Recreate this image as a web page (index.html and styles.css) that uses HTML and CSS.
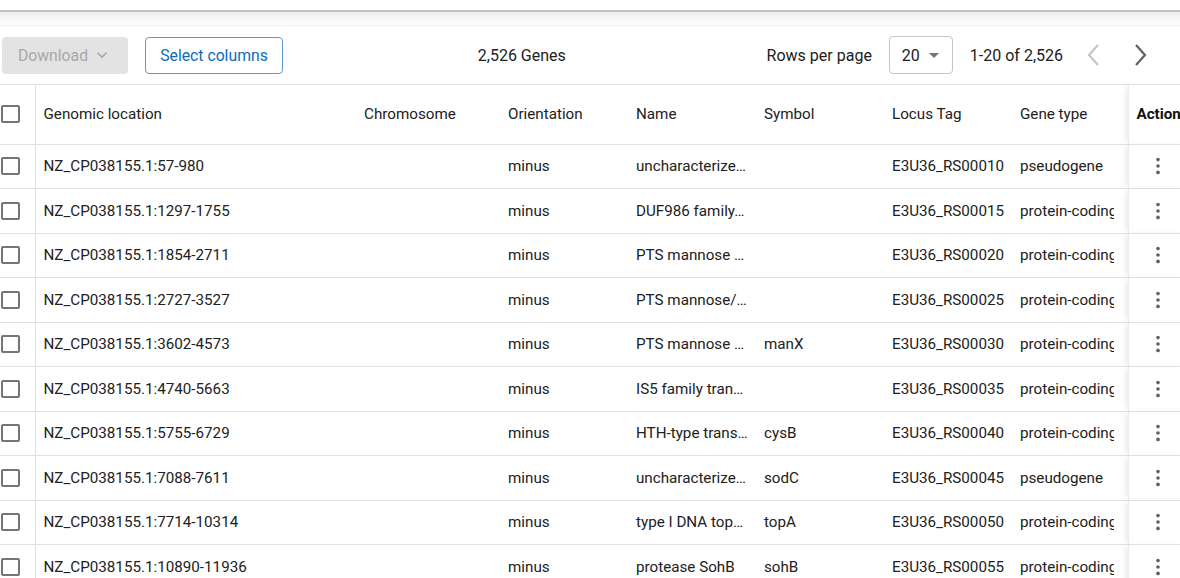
FILE: index.html
```html
<!DOCTYPE html>
<html lang="en">
<head>
<meta charset="utf-8">
<title>Genes</title>
<link rel="stylesheet" href="styles.css">
</head>
<body>
<div class="page">
  <div class="topbar"></div>
  <div class="fade"></div>
  <div class="toolbar">
    <div class="left-group">
      <button class="btn btn-disabled" disabled>Download
        <svg class="chev-down" viewBox="0 0 24 24" width="20" height="20"><path d="M7.41 8.59 12 13.17l4.59-4.58L18 10l-6 6-6-6z"/></svg>
      </button>
      <button class="btn btn-outline">Select columns</button>
    </div>
    <div class="count">2,526 Genes</div>
    <div class="pager">
      <span class="rpp">Rows per page</span>
      <div class="select"><span>20</span><svg viewBox="0 0 10 5" width="10" height="5"><path d="M0 0h10L5 5z"/></svg></div>
      <span class="range">1-20 of 2,526</span>
      <button class="icon-btn prev" aria-label="Previous"><svg viewBox="0 0 14 24" width="14" height="24"><path d="M12 2 3 12l9 10" /></svg></button>
      <button class="icon-btn next" aria-label="Next"><svg viewBox="0 0 14 24" width="14" height="24"><path d="M2 2l9 10-9 10" /></svg></button>
    </div>
  </div>
  <div class="table-wrap">
    <table class="grid">
      <colgroup>
        <col class="c-check"><col class="c-loc"><col class="c-chr"><col class="c-std"><col class="c-std"><col class="c-std"><col class="c-std"><col class="c-type"><col class="c-act">
      </colgroup>
      <thead>
        <tr>
          <th class="check"><span class="cb"></span></th>
          <th>Genomic location</th>
          <th>Chromosome</th>
          <th>Orientation</th>
          <th>Name</th>
          <th>Symbol</th>
          <th>Locus Tag</th>
          <th class="type"><div class="clip">Gene type</div></th>
          <th class="act">Action</th>
        </tr>
      </thead>
      <tbody>
        <tr><td class="check"><span class="cb"></span></td><td>NZ_CP038155.1:57-980</td><td></td><td>minus</td><td>uncharacterize…</td><td></td><td>E3U36_RS00010</td><td class="type"><div class="clip">pseudogene</div></td><td class="act"><svg class="kebab" viewBox="0 0 24 24"><circle cx="12" cy="5" r="2"/><circle cx="12" cy="12" r="2"/><circle cx="12" cy="19" r="2"/></svg></td></tr>
        <tr><td class="check"><span class="cb"></span></td><td>NZ_CP038155.1:1297-1755</td><td></td><td>minus</td><td>DUF986 family…</td><td></td><td>E3U36_RS00015</td><td class="type"><div class="clip">protein-coding</div></td><td class="act"><svg class="kebab" viewBox="0 0 24 24"><circle cx="12" cy="5" r="2"/><circle cx="12" cy="12" r="2"/><circle cx="12" cy="19" r="2"/></svg></td></tr>
        <tr><td class="check"><span class="cb"></span></td><td>NZ_CP038155.1:1854-2711</td><td></td><td>minus</td><td>PTS mannose …</td><td></td><td>E3U36_RS00020</td><td class="type"><div class="clip">protein-coding</div></td><td class="act"><svg class="kebab" viewBox="0 0 24 24"><circle cx="12" cy="5" r="2"/><circle cx="12" cy="12" r="2"/><circle cx="12" cy="19" r="2"/></svg></td></tr>
        <tr><td class="check"><span class="cb"></span></td><td>NZ_CP038155.1:2727-3527</td><td></td><td>minus</td><td>PTS mannose/…</td><td></td><td>E3U36_RS00025</td><td class="type"><div class="clip">protein-coding</div></td><td class="act"><svg class="kebab" viewBox="0 0 24 24"><circle cx="12" cy="5" r="2"/><circle cx="12" cy="12" r="2"/><circle cx="12" cy="19" r="2"/></svg></td></tr>
        <tr><td class="check"><span class="cb"></span></td><td>NZ_CP038155.1:3602-4573</td><td></td><td>minus</td><td>PTS mannose …</td><td>manX</td><td>E3U36_RS00030</td><td class="type"><div class="clip">protein-coding</div></td><td class="act"><svg class="kebab" viewBox="0 0 24 24"><circle cx="12" cy="5" r="2"/><circle cx="12" cy="12" r="2"/><circle cx="12" cy="19" r="2"/></svg></td></tr>
        <tr><td class="check"><span class="cb"></span></td><td>NZ_CP038155.1:4740-5663</td><td></td><td>minus</td><td>IS5 family tran…</td><td></td><td>E3U36_RS00035</td><td class="type"><div class="clip">protein-coding</div></td><td class="act"><svg class="kebab" viewBox="0 0 24 24"><circle cx="12" cy="5" r="2"/><circle cx="12" cy="12" r="2"/><circle cx="12" cy="19" r="2"/></svg></td></tr>
        <tr><td class="check"><span class="cb"></span></td><td>NZ_CP038155.1:5755-6729</td><td></td><td>minus</td><td>HTH-type trans…</td><td>cysB</td><td>E3U36_RS00040</td><td class="type"><div class="clip">protein-coding</div></td><td class="act"><svg class="kebab" viewBox="0 0 24 24"><circle cx="12" cy="5" r="2"/><circle cx="12" cy="12" r="2"/><circle cx="12" cy="19" r="2"/></svg></td></tr>
        <tr><td class="check"><span class="cb"></span></td><td>NZ_CP038155.1:7088-7611</td><td></td><td>minus</td><td>uncharacterize…</td><td>sodC</td><td>E3U36_RS00045</td><td class="type"><div class="clip">pseudogene</div></td><td class="act"><svg class="kebab" viewBox="0 0 24 24"><circle cx="12" cy="5" r="2"/><circle cx="12" cy="12" r="2"/><circle cx="12" cy="19" r="2"/></svg></td></tr>
        <tr><td class="check"><span class="cb"></span></td><td>NZ_CP038155.1:7714-10314</td><td></td><td>minus</td><td>type I DNA top…</td><td>topA</td><td>E3U36_RS00050</td><td class="type"><div class="clip">protein-coding</div></td><td class="act"><svg class="kebab" viewBox="0 0 24 24"><circle cx="12" cy="5" r="2"/><circle cx="12" cy="12" r="2"/><circle cx="12" cy="19" r="2"/></svg></td></tr>
        <tr><td class="check"><span class="cb"></span></td><td>NZ_CP038155.1:10890-11936</td><td></td><td>minus</td><td>protease SohB</td><td>sohB</td><td>E3U36_RS00055</td><td class="type"><div class="clip">protein-coding</div></td><td class="act"><svg class="kebab" viewBox="0 0 24 24"><circle cx="12" cy="5" r="2"/><circle cx="12" cy="12" r="2"/><circle cx="12" cy="19" r="2"/></svg></td></tr>
      </tbody>
    </table>
  </div>
</div>
</body>
</html>
```

FILE: styles.css
```css
* { box-sizing: border-box; }
html, body { margin: 0; padding: 0; background: #fff; }
body {
  font-family: Roboto, "Liberation Sans", Arial, sans-serif;
  color: #212121;
  width: 1180px;
  height: 578px;
  overflow: hidden;
}
.page { width: 1180px; }

.topbar {
  height: 12px;
  border-bottom: 2px solid #c2c2c2;
  background: #fff;
}
.fade {
  height: 14px;
  background: linear-gradient(#ececec, #f9f9f9 60%, #fcfcfc);
  border-bottom: 1px solid #f1f1f1;
}

.toolbar {
  display: flex;
  align-items: center;
  height: 59px;
  padding: 0 19px 0 2px;
  border-bottom: 1px solid #e0e0e0;
  font-size: 16px;
  color: #212121;
}
.left-group { display: flex; gap: 17px; align-items: center; }
.btn {
  font-family: inherit;
  font-size: 15.75px;
  height: 37px;
  border-radius: 4px;
  display: flex;
  align-items: center;
  justify-content: center;
  padding: 0 14px;
}
.btn-disabled {
  width: 126px;
  background: #e3e3e3;
  border: none;
  color: #a8a8a8;
  gap: 4px;
}
.chev-down { fill: #a8a8a8; }
.btn-outline {
  width: 138px;
  background: #fff;
  border: 1px solid #5b9bd1;
  color: #0b6db7;
}
.count {
  flex: 1;
  text-align: center;
  padding-right: 6px;
}
.pager { display: flex; align-items: center; }
.rpp { margin-right: 17px; }
.select {
  width: 64px;
  height: 38px;
  border: 1px solid #c4c4c4;
  border-radius: 4px;
  display: flex;
  align-items: center;
  padding-left: 12px;
  gap: 9px;
  margin-right: 17px;
}
.select svg { fill: #757575; }
.range { margin-right: 2px; }
.icon-btn {
  width: 40px;
  height: 40px;
  border: none;
  background: none;
  display: flex;
  align-items: center;
  justify-content: center;
  padding: 0;
  margin-left: 8px;
}
.icon-btn svg { fill: none; stroke-width: 2.2; }
.prev svg { stroke: #c4c4c4; }
.next svg { stroke: #616161; }

.table-wrap { width: 1180px; overflow: hidden; }
.grid {
  table-layout: fixed;
  border-collapse: collapse;
  width: 1190px;
  font-size: 15.2px;
}
.c-check { width: 35px; }
.c-loc { width: 321px; }
.c-chr { width: 144px; }
.c-std { width: 128px; }
.c-type { width: 116px; }
.c-act { width: 62px; }

.grid th, .grid td {
  text-align: left;
  padding: 0 8px;
  white-space: nowrap;
  overflow: hidden;
  text-overflow: ellipsis;
  border-bottom: 1px solid #e0e0e0;
  color: #212121;
}
.grid th { height: 59px; font-weight: 400; }
.grid td { height: 44.5px; }
.grid .check {
  padding: 0 0 0 1px;
  border-right: 1px solid #e0e0e0;
  text-overflow: clip;
}
.grid .type { padding-right: 14px; }
.clip { overflow: hidden; white-space: nowrap; }
.grid .act {
  background: #fff;
  border-left: 1px solid #ebebeb;
  box-shadow: -4px 0 6px -2px rgba(0,0,0,0.09);
  overflow: visible;
}
.grid th.act { font-weight: 700; padding-left: 8px; color: #111; }
.grid td.act { padding: 0 0 0 18px; }
.cb {
  display: block;
  width: 19px;
  height: 18px;
  border: 2px solid #757575;
  border-radius: 2px;
}
.kebab {
  display: block;
  width: 22px;
  height: 22px;
  fill: #616161;
}
```
